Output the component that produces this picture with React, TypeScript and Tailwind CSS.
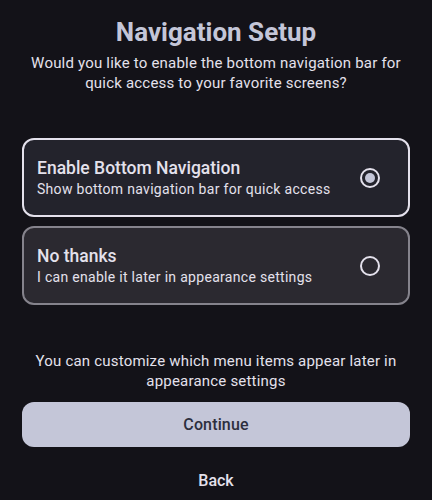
import { useState } from "react";

type Choice = "enable" | "skip";

function Radio({ checked }: { checked: boolean }) {
    return (
        <span className="flex h-5 w-5 items-center justify-center rounded-full border-2 border-[#e4e1ec]">
            {checked && <span className="h-2.5 w-2.5 rounded-full bg-[#c4c6d8]" />}
        </span>
    );
}

export default function App() {
    const [choice, setChoice] = useState<Choice>("enable");

    const options = [
        { id: "enable" as Choice, title: "Enable Bottom Navigation", desc: "Show bottom navigation bar for quick access" },
        { id: "skip" as Choice, title: "No thanks", desc: "I can enable it later in appearance settings" },
    ];

    return (
        <div className="flex min-h-[500px] w-full flex-col bg-[#131218] px-[22px] pt-[14px] font-['Roboto',sans-serif] text-[#e4e1ec]">
            {/* Heading */}
            <h1 className="text-center text-[26px] font-bold leading-9 text-[#c4c6d8]">Navigation Setup</h1>
            <p className="mt-[3px] text-center text-[15px] leading-5 tracking-[0.2px] text-[#e4e1ec]">
                Would you like to enable the bottom navigation bar for quick access to your favorite screens?
            </p>

            {/* Options */}
            <div className="mt-[45px] flex flex-col gap-[9px]">
                {options.map((o) => {
                    const active = choice === o.id;
                    return (
                        <button
                            key={o.id}
                            onClick={() => setChoice(o.id)}
                            className={
                                active
                                    ? "flex h-[79px] items-center justify-between rounded-xl border-2 border-[#e4e1ec] bg-[#23232c] pl-[13px] pr-[28px] text-left"
                                    : "flex h-[79px] items-center justify-between rounded-xl border-2 border-[#85838c] bg-[#2b2930] pl-[13px] pr-[28px] text-left"
                            }
                        >
                            <div className="flex flex-col">
                                <span className="text-[17.5px] font-medium leading-6 text-[#e4e1ec]">{o.title}</span>
                                <span className="-mt-[1px] text-sm leading-5 tracking-[0.3px] text-[#e4e1ec]">{o.desc}</span>
                            </div>
                            <Radio checked={active} />
                        </button>
                    );
                })}
            </div>

            {/* Footer */}
            <p className="mt-[46px] text-center text-[15px] leading-5 tracking-[0.2px] text-[#e4e1ec]">
                You can customize which menu items appear later in appearance settings
            </p>
            <button className="mt-[11px] h-[45px] rounded-xl bg-[#c4c6d8] text-base font-medium tracking-[0.15px] text-[#2d2f3e]">
                Continue
            </button>
            <button className="mt-[22px] h-6 text-base font-medium text-[#e4e1ec]">Back</button>
        </div>
    );
}
